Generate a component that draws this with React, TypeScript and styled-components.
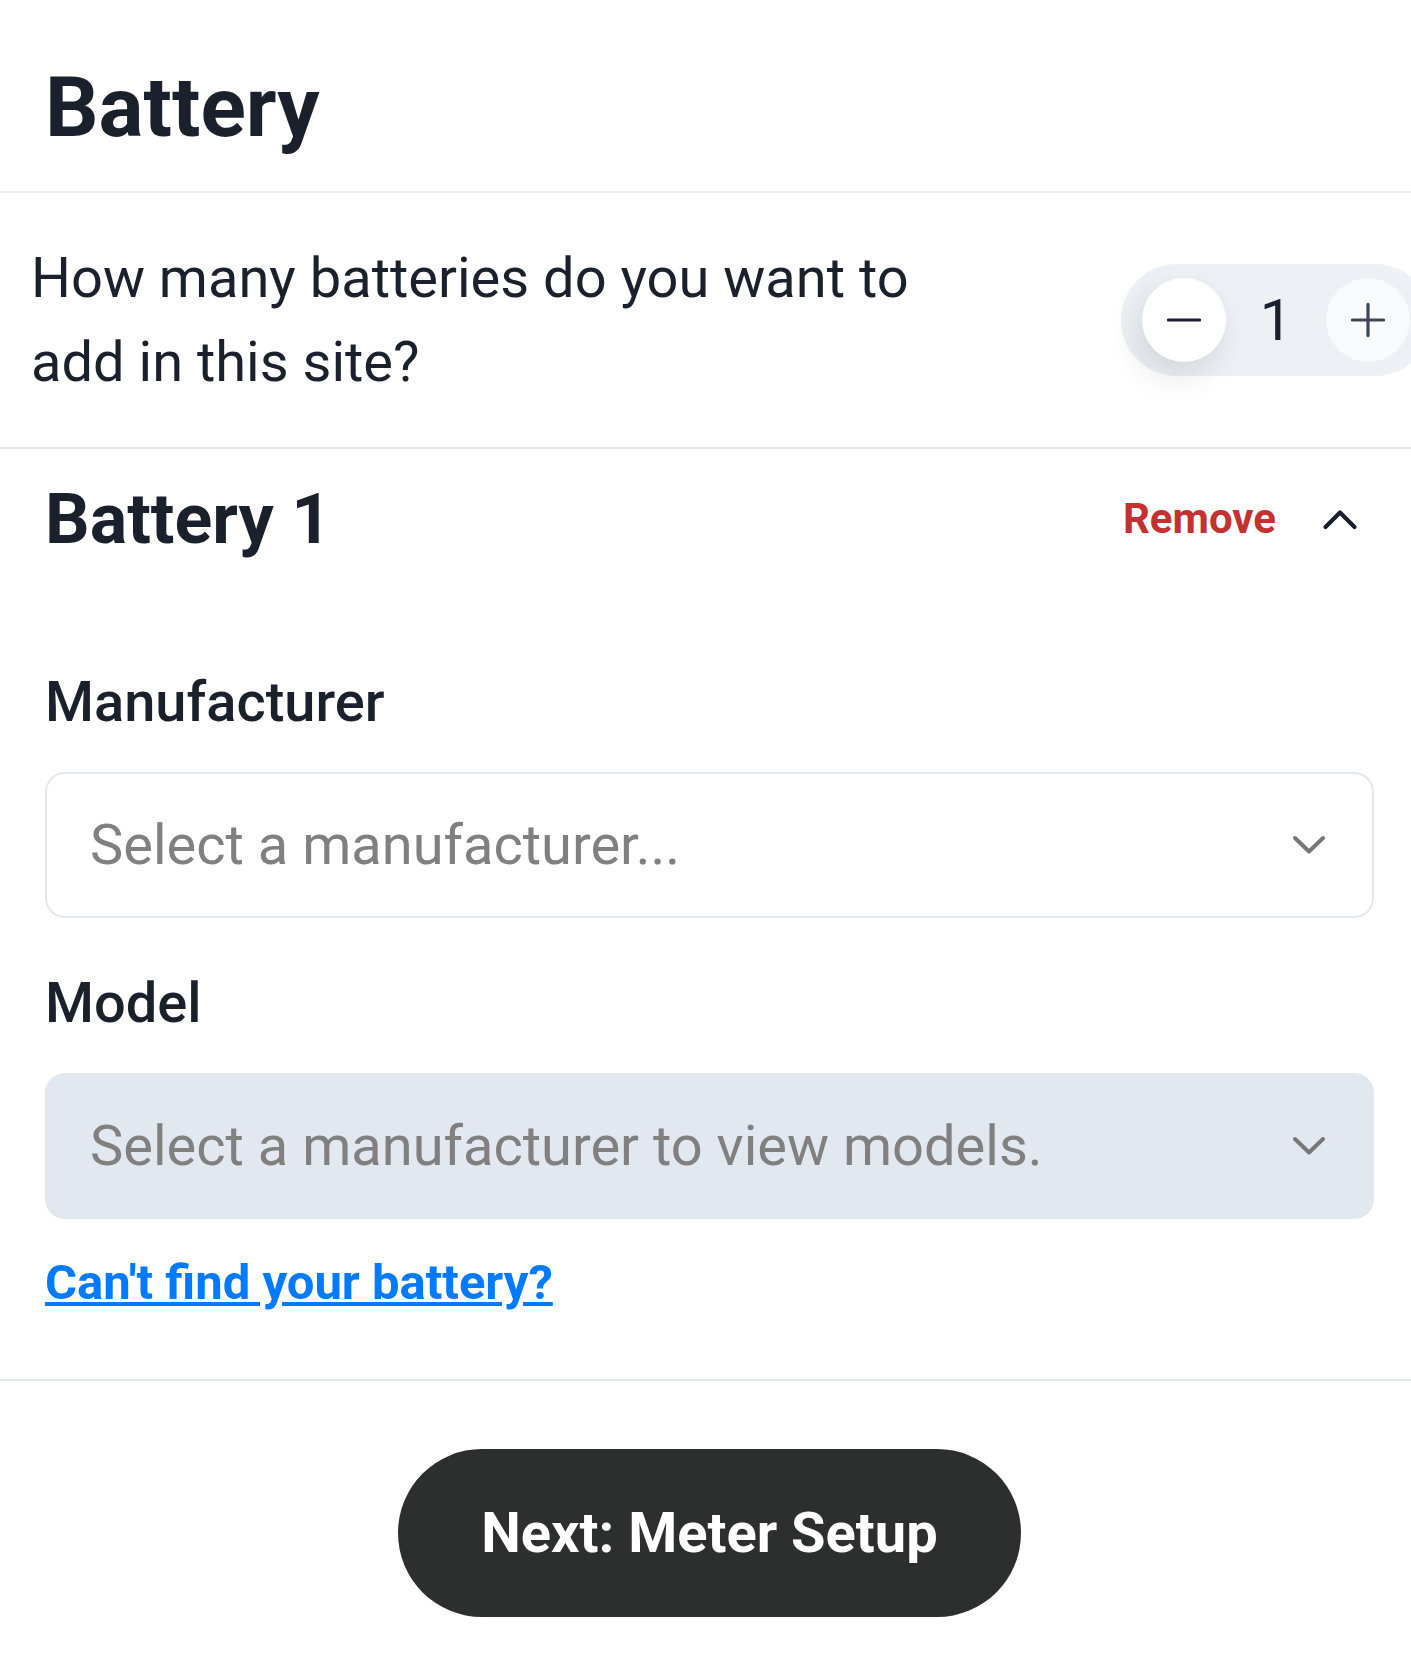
import React, { useState } from 'react'
import styled, { createGlobalStyle } from 'styled-components'

const GlobalStyle = createGlobalStyle`
  html, body {
    margin: 0;
    padding: 0;
    background: #fff;
    overflow-x: hidden;
  }
  body {
    font-family: Roboto, "Liberation Sans", Arial, sans-serif;
    color: #1a202c;
  }
  * {
    box-sizing: border-box;
  }
`

const ChevronDown = () => (
  <svg width="36" height="22" viewBox="0 0 36 22" fill="none">
    <polyline
      points="4,4 18,17.5 32,4"
      stroke="#777"
      strokeWidth="4"
      strokeLinecap="round"
      strokeLinejoin="round"
    />
  </svg>
)

const ChevronUp = () => (
  <svg width="36" height="22" viewBox="0 0 36 22" fill="none">
    <polyline
      points="3.5,19 18,4.5 32.5,19"
      stroke="#1a202c"
      strokeWidth="4.2"
      strokeLinecap="round"
      strokeLinejoin="round"
    />
  </svg>
)

const MinusIcon = () => (
  <svg width="34" height="34" viewBox="0 0 34 34" fill="none">
    <line x1="1.5" y1="17" x2="32.5" y2="17" stroke="#1a202c" strokeWidth="3.2" strokeLinecap="round" />
  </svg>
)

const PlusIcon = () => (
  <svg width="34" height="34" viewBox="0 0 34 34" fill="none">
    <line x1="1.5" y1="17" x2="32.5" y2="17" stroke="#3f4654" strokeWidth="3.2" strokeLinecap="round" />
    <line x1="17" y1="1.5" x2="17" y2="32.5" stroke="#3f4654" strokeWidth="3.2" strokeLinecap="round" />
  </svg>
)

export default function App() {
  const [count, setCount] = useState(1)

  return (
    <Page>
      <GlobalStyle />
      <Header>
        <Title>Battery</Title>
      </Header>

      <QuestionRow>
        <Question>How many batteries do you want to add in this site?</Question>
        <Stepper>
          <StepButton onClick={() => setCount(Math.max(1, count - 1))} aria-label="Decrease">
            <MinusIcon />
          </StepButton>
          <Count>{count}</Count>
          <StepButton light onClick={() => setCount(count + 1)} aria-label="Increase">
            <PlusIcon />
          </StepButton>
        </Stepper>
      </QuestionRow>

      <BatterySection>
        <BatteryHead>
          <BatteryTitle>Battery 1</BatteryTitle>
          <Actions>
            <RemoveButton>Remove</RemoveButton>
            <ToggleButton aria-label="Collapse">
              <ChevronUp />
            </ToggleButton>
          </Actions>
        </BatteryHead>

        <Fields>
          <Field>
            <Label>Manufacturer</Label>
            <Select>
              <Placeholder>Select a manufacturer...</Placeholder>
              <ChevronDown />
            </Select>
          </Field>
          <Field>
            <Label>Model</Label>
            <Select disabled>
              <Placeholder>Select a manufacturer to view models.</Placeholder>
              <ChevronDown />
            </Select>
          </Field>
        </Fields>

        <HelpLink href="#">Can't find your battery?</HelpLink>
      </BatterySection>

      <Footer>
        <NextButton>Next: Meter Setup</NextButton>
      </Footer>
    </Page>
  )
}

const Page = styled.div`
  width: 1419px;
  background: #fff;
`

const Header = styled.header`
  padding: 58px 45px 33px;
  border-bottom: 2px solid #edf1f5;
`

const Title = styled.h1`
  margin: 0;
  font-size: 84px;
  line-height: 100px;
  font-weight: 700;
  color: #1a202c;
`

const QuestionRow = styled.section`
  display: flex;
  align-items: center;
  justify-content: space-between;
  padding: 43px 0 43px 31px;
  border-bottom: 2px solid #e2e8f0;
`

const Question = styled.p`
  margin: 0;
  max-width: 920px;
  font-size: 56px;
  line-height: 84px;
  font-weight: 400;
  color: #1a202c;
`

const Stepper = styled.div`
  flex-shrink: 0;
  display: flex;
  align-items: center;
  margin-right: -12px;
  padding: 14px 21px;
  border-radius: 60px;
  background: #edf1f5;
`

const StepButton = styled.button<{ light?: boolean }>`
  display: flex;
  align-items: center;
  justify-content: center;
  width: 84px;
  height: 84px;
  padding: 0;
  border: none;
  border-radius: 50%;
  background: ${({ light }) => (light ? '#f8fafc' : '#ffffff')};
  box-shadow: ${({ light }) => (light ? 'none' : '-6px 14px 30px rgba(30, 41, 59, 0.13)')};
  cursor: pointer;
`

const Count = styled.span`
  width: 100px;
  text-align: center;
  font-size: 58px;
  line-height: 84px;
  font-weight: 400;
  color: #1a202c;
`

const BatterySection = styled.section`
  padding: 28px 45px 67px;
  border-bottom: 2px solid #e2e8f0;
`

const BatteryHead = styled.div`
  display: flex;
  align-items: center;
  justify-content: space-between;
`

const BatteryTitle = styled.h2`
  margin: 0;
  font-size: 70px;
  line-height: 84px;
  font-weight: 700;
  color: #1a202c;
`

const Actions = styled.div`
  display: flex;
  align-items: center;
  gap: 30px;
`

const RemoveButton = styled.button`
  padding: 0;
  border: none;
  background: none;
  font-family: inherit;
  font-size: 42px;
  line-height: 50px;
  font-weight: 700;
  color: #c53030;
  cursor: pointer;
`

const ToggleButton = styled.button`
  display: flex;
  align-items: center;
  justify-content: center;
  width: 68px;
  height: 68px;
  padding: 0;
  border: none;
  background: none;
  cursor: pointer;
`

const Fields = styled.div`
  display: flex;
  flex-direction: column;
  gap: 51px;
  margin-top: 107px;
`

const Field = styled.div`
  display: flex;
  flex-direction: column;
  gap: 36px;
`

const Label = styled.label`
  font-size: 56px;
  line-height: 68px;
  font-weight: 500;
  color: #1a202c;
`

const Select = styled.div<{ disabled?: boolean }>`
  display: flex;
  align-items: center;
  justify-content: space-between;
  height: 146px;
  padding: 0 45px 0 43px;
  border: 2px solid #e2e8f0;
  border-radius: 20px;
  background: ${({ disabled }) => (disabled ? '#e2e8f0' : '#ffffff')};
`

const Placeholder = styled.span`
  font-size: 56px;
  line-height: 68px;
  font-weight: 400;
  color: #808080;
`

const HelpLink = styled.a`
  display: inline-block;
  margin-top: 35px;
  font-size: 49px;
  line-height: 58px;
  font-weight: 700;
  color: #007bff;
  text-decoration: underline;
`

const Footer = styled.footer`
  display: flex;
  justify-content: center;
  padding: 68px 0 41px;
`

const NextButton = styled.button`
  width: 623px;
  height: 168px;
  border: none;
  border-radius: 84px;
  background: #2d2f2e;
  font-family: inherit;
  font-size: 56px;
  font-weight: 700;
  color: #ffffff;
  cursor: pointer;
`
